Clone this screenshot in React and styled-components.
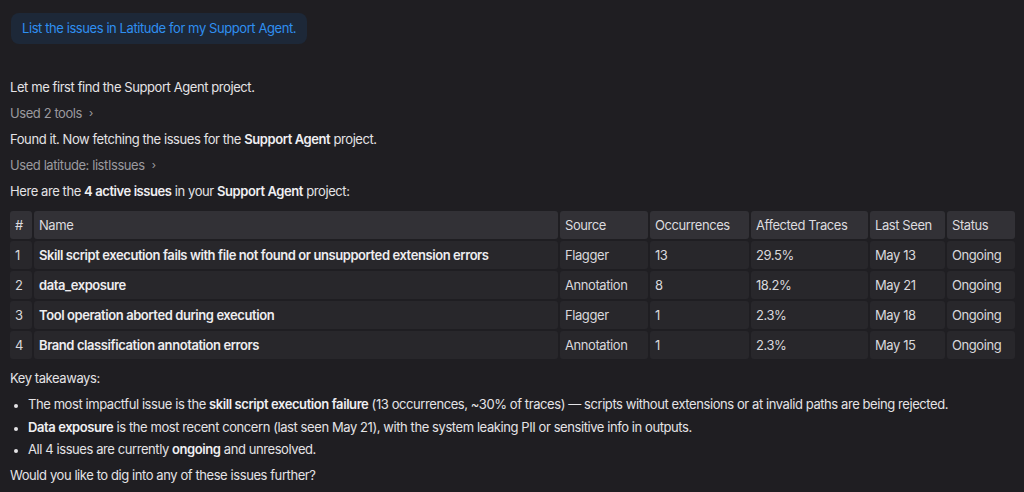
import React from "react";
import styled, { createGlobalStyle } from "styled-components";

const GlobalStyle = createGlobalStyle`
  html, body {
    margin: 0;
    padding: 0;
    background: #1f1e22;
  }
  body {
    font-family: Inter, "Noto Sans", sans-serif;
    font-size: 13px;
    letter-spacing: -0.42px;
    color: #e4e3e6;
    -webkit-font-smoothing: antialiased;
  }
`;

const Page = styled.div`
  padding: 13px 9px 0 10px;
`;

const UserBubble = styled.div`
  display: inline-block;
  padding: 6px 11px;
  margin-left: 1px;
  border-radius: 8px;
  background: #1d2838;
  color: #2f8ff0;
  line-height: 19px;
`;

const Reply = styled.div`
  margin-top: 34px;
`;

const Para = styled.p`
  margin: 0 0 8px;
  line-height: 18px;
`;

const ToolLine = styled.div`
  display: flex;
  align-items: center;
  gap: 7px;
  margin: 0 0 8px;
  line-height: 18px;
  color: #9b9a9f;
`;

const Chevron = styled.span`
  font-size: 11px;
  color: #a09fa4;
`;

const Strong = styled.strong`
  font-weight: 600;
  color: #f0eff2;
`;

const Table = styled.table`
  width: calc(100% + 4px);
  margin: 9px -2px 8px;
  border-collapse: separate;
  border-spacing: 2px;
  table-layout: fixed;
`;

const Th = styled.th`
  width: ${(p) => (p.$w ? `${p.$w}px` : "auto")};
  padding: 5px 5px;
  background: #323136;
  border-radius: 3px;
  text-align: left;
  font-weight: 400;
  line-height: 18px;
  color: #dcdbdf;
`;

const Td = styled.td`
  padding: 5px 5px;
  background: #28272b;
  border-radius: 3px;
  line-height: 18px;
  font-weight: ${(p) => (p.$bold ? 600 : 400)};
  color: ${(p) => (p.$bold ? "#eeedf0" : "#d9d8dc")};
  white-space: nowrap;
`;

const List = styled.ul`
  margin: 0 0 8px;
  padding-left: 18px;
`;

const Item = styled.li`
  line-height: 18px;
  margin-bottom: 4.5px;
  &::marker {
    font-size: 11px;
  }
`;

const issues = [
  ["1", "Skill script execution fails with file not found or unsupported extension errors", "Flagger", "13", "29.5%", "May 13", "Ongoing"],
  ["2", "data_exposure", "Annotation", "8", "18.2%", "May 21", "Ongoing"],
  ["3", "Tool operation aborted during execution", "Flagger", "1", "2.3%", "May 18", "Ongoing"],
  ["4", "Brand classification annotation errors", "Annotation", "1", "2.3%", "May 15", "Ongoing"],
];

const columns = [
  { label: "#", w: 12 },
  { label: "Name" },
  { label: "Source", w: 78 },
  { label: "Occurrences", w: 89 },
  { label: "Affected Traces", w: 107 },
  { label: "Last Seen", w: 65 },
  { label: "Status", w: 58 },
];

export default function App() {
  return (
    <>
      <GlobalStyle />
      <Page>
        <UserBubble>List the issues in Latitude for my Support Agent.</UserBubble>
        <Reply>
          <Para>Let me first find the Support Agent project.</Para>
          <ToolLine>
            Used 2 tools <Chevron>›</Chevron>
          </ToolLine>
          <Para>
            Found it. Now fetching the issues for the <Strong>Support Agent</Strong> project.
          </Para>
          <ToolLine>
            Used latitude: listIssues <Chevron>›</Chevron>
          </ToolLine>
          <Para>
            Here are the <Strong>4 active issues</Strong> in your <Strong>Support Agent</Strong> project:
          </Para>
          <Table>
            <thead>
              <tr>
                {columns.map((c) => (
                  <Th key={c.label} $w={c.w}>
                    {c.label}
                  </Th>
                ))}
              </tr>
            </thead>
            <tbody>
              {issues.map((row) => (
                <tr key={row[0]}>
                  {row.map((cell, i) => (
                    <Td key={i} $bold={i === 1}>
                      {cell}
                    </Td>
                  ))}
                </tr>
              ))}
            </tbody>
          </Table>
          <Para>Key takeaways:</Para>
          <List>
            <Item>
              The most impactful issue is the <Strong>skill script execution failure</Strong> (13 occurrences, ~30% of traces) — scripts without extensions or at invalid paths are being rejected.
            </Item>
            <Item>
              <Strong>Data exposure</Strong> is the most recent concern (last seen May 21), with the system leaking PII or sensitive info in outputs.
            </Item>
            <Item>
              All 4 issues are currently <Strong>ongoing</Strong> and unresolved.
            </Item>
          </List>
          <Para>Would you like to dig into any of these issues further?</Para>
        </Reply>
      </Page>
    </>
  );
}
